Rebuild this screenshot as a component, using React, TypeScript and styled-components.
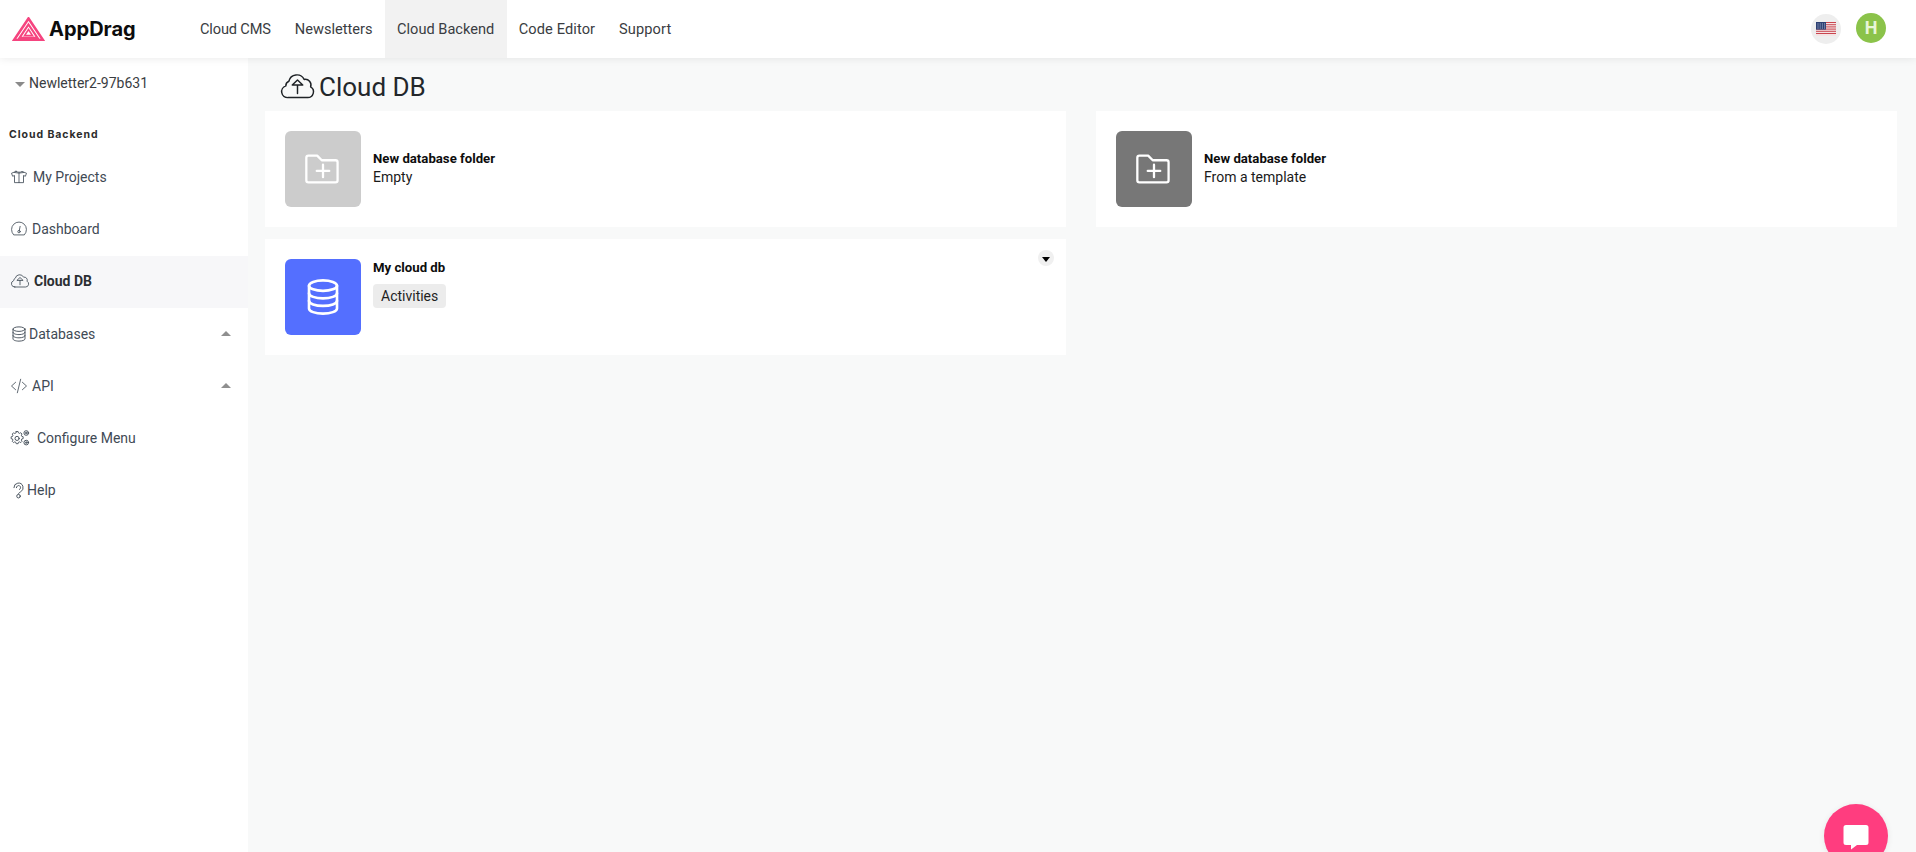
import React from "react";
import styled, { createGlobalStyle } from "styled-components";

const Global = createGlobalStyle`
  html, body { margin: 0; padding: 0; height: 100%; overflow: hidden; }
  body { font-family: Roboto, "Liberation Sans", sans-serif; background: #f8f9f9; color: #212529; }
  #root { height: 100%; }
`;

const Page = styled.div`
  display: flex;
  flex-direction: column;
  height: 852px;
  overflow: hidden;
`;

const TopBar = styled.header`
  display: flex;
  align-items: stretch;
  flex: 0 0 58px;
  height: 58px;
  background: #fff;
  box-shadow: 0 1px 8px rgba(0, 0, 0, 0.08);
  position: relative;
  z-index: 2;
`;

const Brand = styled.div`
  display: flex;
  align-items: center;
  gap: 4px;
  width: 188px;
  padding-left: 12px;
  box-sizing: border-box;
`;

const BrandName = styled.span`
  font-family: Inter, Roboto, sans-serif;
  font-size: 20px;
  font-weight: 700;
  letter-spacing: 0;
  color: #0c0c0c;
`;

const NavLink = styled.div<{ $active?: boolean; $ls?: number }>`
  display: flex;
  align-items: center;
  padding: 0 ${(p) => (p.$active ? 12.5 : 12)}px 1px;
  font-size: 14.6px;
  letter-spacing: ${(p) => p.$ls ?? 0}px;
  color: #3a3d42;
  background: ${(p) => (p.$active ? "#f2f2f2" : "transparent")};
`;

const TopRight = styled.div`
  margin-left: auto;
  display: flex;
  align-items: center;
  gap: 15px;
  padding: 0 30px 3px 0;
`;

const FlagCircle = styled.div`
  width: 30px;
  height: 30px;
  margin-top: 2px;
  border-radius: 50%;
  background: #eeeeee;
  display: flex;
  align-items: center;
  justify-content: center;
`;

const Avatar = styled.div`
  width: 30px;
  height: 30px;
  border-radius: 50%;
  background: #8bc34a;
  color: #e8f5d8;
  font-family: Roboto, sans-serif;
  font-size: 18px;
  font-weight: 700;
  display: flex;
  align-items: center;
  justify-content: center;
`;

const Body = styled.div`
  flex: 1;
  display: flex;
  min-height: 0;
`;

const Sidebar = styled.aside`
  flex: 0 0 248px;
  background: #fff;
  box-sizing: border-box;
`;

const ProjectPicker = styled.div`
  display: flex;
  align-items: center;
  gap: 4px;
  height: 20px;
  margin-top: 15px;
  padding-left: 15px;
  font-size: 14px;
  color: #3a3d42;
`;

const CaretDown = styled.span`
  width: 0;
  height: 0;
  border-left: 5px solid transparent;
  border-right: 5px solid transparent;
  border-top: 5px solid #8a8a8a;
  margin-top: 2px;
`;

const SideHeading = styled.div`
  margin: 33px 0 0 9px;
  height: 18px;
  line-height: 18px;
  font-family: Inter, Roboto, sans-serif;
  font-size: 10.5px;
  font-weight: 700;
  letter-spacing: 0.95px;
  color: #2c2c2c;
`;

const SideList = styled.nav`
  margin-top: 7px;
  display: flex;
  flex-direction: column;
`;

const SideRow = styled.div<{ $active?: boolean; $gap?: number }>`
  display: flex;
  align-items: center;
  gap: ${(p) => p.$gap ?? 5}px;
  height: 52.3px;
  padding: 0 17px 1px 10px;
  box-sizing: border-box;
  font-size: 14px;
  font-weight: ${(p) => (p.$active ? 700 : 400)};
  color: ${(p) => (p.$active ? "#2b2f33" : "#3f4a55")};
  background: ${(p) => (p.$active ? "#f7f7f9" : "transparent")};
`;

const CaretUp = styled.span`
  margin-left: auto;
  width: 0;
  height: 0;
  border-left: 5px solid transparent;
  border-right: 5px solid transparent;
  border-bottom: 5px solid #8f8f8f;
`;

const Main = styled.main`
  flex: 1;
  min-width: 0;
  padding: 0 19px 0 17px;
  box-sizing: border-box;
`;

const TitleRow = styled.div`
  display: flex;
  align-items: center;
  gap: 3px;
  height: 53px;
  padding: 4px 0 0 14px;
  box-sizing: border-box;
`;

const Title = styled.h1`
  margin: 0;
  font-size: 26px;
  font-weight: 400;
  color: #23272b;
`;

const Grid = styled.div`
  display: grid;
  grid-template-columns: 801px 801px;
  column-gap: 30px;
  row-gap: 12px;
  align-items: start;
`;

const Card = styled.section`
  position: relative;
  display: flex;
  height: 116px;
  padding: 20px;
  box-sizing: border-box;
  background: #fff;
  gap: 12px;
`;

const Tile = styled.div<{ $bg: string }>`
  flex: 0 0 76px;
  width: 76px;
  height: 76px;
  border-radius: 6px;
  background: ${(p) => p.$bg};
  display: flex;
  align-items: center;
  justify-content: center;
`;

const CardText = styled.div<{ $center?: boolean }>`
  display: flex;
  flex-direction: column;
  justify-content: ${(p) => (p.$center ? "center" : "flex-start")};
  align-items: flex-start;
  padding-bottom: ${(p) => (p.$center ? "2px" : "0")};
  color: #111;
`;

const CardTitle = styled.div`
  font-size: 13.2px;
  font-weight: 700;
  line-height: 18px;
  color: #0d0d0d;
`;

const CardSub = styled.div`
  font-size: 14px;
  line-height: 19px;
  color: #1a1a1a;
`;

const Tag = styled.span`
  margin-top: 7px;
  padding: 0 8px;
  height: 24px;
  line-height: 24px;
  border-radius: 4px;
  background: #ececec;
  font-size: 14px;
  color: #1f1f1f;
`;

const MenuDot = styled.div`
  position: absolute;
  top: 11px;
  right: 12px;
  width: 16px;
  height: 16px;
  border-radius: 50%;
  background: #f0f0f0;
  display: flex;
  align-items: center;
  justify-content: center;
  &::after {
    content: "";
    width: 0;
    height: 0;
    margin-top: 2px;
    border-left: 4.5px solid transparent;
    border-right: 4.5px solid transparent;
    border-top: 5px solid #000;
  }
`;

const ChatBubble = styled.div`
  position: absolute;
  left: 1824px;
  top: 804px;
  width: 64px;
  height: 64px;
  border-radius: 50%;
  background: #ff3d7f;
  display: flex;
  align-items: center;
  justify-content: center;
  box-shadow: 0 1px 6px rgba(0, 0, 0, 0.08);
  z-index: 3;
`;

const Icon = ({ children, size = 18, sw = 1.1, color = "#3f4a55", vb = 24 }: { children: React.ReactNode; size?: number; sw?: number; color?: string; vb?: number }) => (
  <svg width={size} height={size} viewBox={`0 0 ${vb} ${vb}`} fill="none" stroke={color} strokeWidth={sw} strokeLinecap="round" strokeLinejoin="round" style={{ flex: "none" }}>
    {children}
  </svg>
);

const CloudUp = ({ size, color, sw }: { size: number; color?: string; sw?: number }) => (
  <Icon size={size} color={color} sw={sw}>
    <path d="M5.800 19.200H18.600a3.700 3.700 0 0 0 1.900-6.900 3.700 3.700 0 0 0-4.200-4.900 5.300 5.300 0 0 0-9.900 1.200 3.300 3.300 0 0 0-2 3A3.900 3.900 0 0 0 5.800 19.200z" />
    <path d="M12 16.500v-5.500M8.600 11L12 7.800 15.400 11z" />
  </Icon>
);

const FolderPlus = () => (
  <Icon size={50} color="#fff" sw={1.1}>
    <path d="M4 6.600a1 1 0 0 1 1-1h4.200l2.200 2.200h6.600a1 1 0 0 1 1 1v8.600a1 1 0 0 1-1 1H5a1 1 0 0 1-1-1z" />
    <path d="M12 9.900v6M9 12.900h6" />
  </Icon>
);

const DbLines = ({ size, color, sw }: { size: number; color: string; sw: number }) => (
  <Icon size={size} color={color} sw={sw}>
    <ellipse cx="12" cy="5.500" rx="8" ry="3" />
    <path d="M4 5.500v13c0 1.700 3.600 3 8 3s8-1.300 8-3v-13" />
    <path d="M4 9.800c0 1.700 3.600 3 8 3s8-1.300 8-3M4 14.100c0 1.700 3.600 3 8 3s8-1.300 8-3" />
  </Icon>
);

const Logo = () => (
  <svg width="33" height="24" viewBox="0 0 33 24" fill="none" style={{ flex: "none" }}>
    <path d="M16.500 1.500L31 23H2z" stroke="#f5447f" strokeWidth="2.600" strokeLinejoin="miter" />
    <path d="M16.500 7.500L25.500 20.800H7.500z" stroke="#f5447f" strokeWidth="2.200" />
    <path d="M16.500 12.500L20.500 18.600H12.500z" stroke="#f5447f" strokeWidth="1.600" />
  </svg>
);

const Flag = () => (
  <svg width="20" height="14" viewBox="0 0 20 14" style={{ flex: "none" }}>
    <rect width="20" height="14" fill="#f4e3e3" />
    {[0, 2.2, 4.4, 6.6, 8.8, 11].map((y) => (
      <rect key={y} x="0" y={y} width="20" height="1" fill="#c9454f" />
    ))}
    <rect width="10" height="7.600" fill="#2c3f72" />
    {[1.5, 3.5, 5.5].map((y) =>
      [1.5, 3.7, 5.9, 8.1].map((x) => <rect key={`${x}-${y}`} x={x} y={y} width="1" height="1" fill="#b7c0d8" />)
    )}
  </svg>
);

export default function App() {
  return (
    <Page>
      <Global />
      <TopBar>
        <Brand>
          <Logo />
          <BrandName>AppDrag</BrandName>
        </Brand>
        <NavLink $ls={-0.15}>Cloud CMS</NavLink>
        <NavLink>Newsletters</NavLink>
        <NavLink $active>Cloud Backend</NavLink>
        <NavLink $ls={0.1}>Code Editor</NavLink>
        <NavLink $ls={0.1}>Support</NavLink>
        <TopRight>
          <FlagCircle>
            <Flag />
          </FlagCircle>
          <Avatar>H</Avatar>
        </TopRight>
      </TopBar>
      <Body>
        <Sidebar>
          <ProjectPicker>
            <CaretDown />
            Newletter2-97b631
          </ProjectPicker>
          <SideHeading>Cloud Backend</SideHeading>
          <SideList>
            <SideRow $gap={5}>
              <Icon size={18}>
                <path d="M8 4.500L2 7l1.500 4 2.500-1v9.500h12V10l2.500 1 1.500-4L16 4.500c-1 1.600-7 1.600-8 0z" />
                <path d="M12 6.500v13M6 6l6 .8L18 6" />
              </Icon>
              My Projects
            </SideRow>
            <SideRow $gap={4}>
              <Icon size={18}>
                <path d="M4.600 19.500a10 10 0 1 1 14.800 0z" />
                <path d="M13.500 8.500L12.400 14" />
                <circle cx="12" cy="15.500" r="1.600" />
              </Icon>
              Dashboard
            </SideRow>
            <SideRow $active $gap={4}>
              <CloudUp size={20} color="#3f4a55" sw={1} />
              Cloud DB
            </SideRow>
            <SideRow $gap={1}>
              <DbLines size={18} color="#3f4a55" sw={1.2} />
              Databases
              <CaretUp />
            </SideRow>
            <SideRow $gap={4}>
              <Icon size={18}>
                <path d="M7.500 7L2 12l5.500 5M16.500 7l5.500 5-5.500 5M14.200 3l-4.400 18" />
              </Icon>
              API
              <CaretUp />
            </SideRow>
            <SideRow $gap={7}>
              <Icon size={20}>
                <circle cx="8.500" cy="12.500" r="2.500" />
                <path d="M7.300 6h2.400l.4 1.700 1.500.7 1.500-.9 1.600 1.700-.9 1.400.6 1.600 1.700.400v2.400l-1.700.400-.6 1.500.9 1.500-1.600 1.600-1.500-.9-1.500.6-.4 1.700H7.300l-.4-1.700-1.500-.6-1.500.9-1.600-1.600.9-1.500-.6-1.500L.9 15.100v-2.400l1.700-.4.6-1.600-.9-1.400 1.600-1.700 1.500.9 1.500-.7z" transform="translate(0.500 -1.500) scale(0.95)" />
                <circle cx="19.500" cy="6" r="2.800" />
                <circle cx="19.500" cy="6" r="1" />
                <circle cx="19.500" cy="17.500" r="2.800" />
                <circle cx="19.500" cy="17.500" r="1" />
              </Icon>
              Configure Menu
            </SideRow>
            <SideRow $gap={0}>
              <Icon size={17} sw={1.3}>
                <path d="M5.500 8a6.500 6.500 0 1 1 9.500 5.800c-1.600.9-2.500 1.400-3 3" />
                <path d="M9 8a3 3 0 1 1 4.500 2.600" />
                <circle cx="12" cy="20" r="2.500" />
              </Icon>
              Help
            </SideRow>
          </SideList>
        </Sidebar>
        <Main>
          <TitleRow>
            <CloudUp size={37} color="#1f2327" sw={0.95} />
            <Title>Cloud DB</Title>
          </TitleRow>
          <Grid>
            <Card>
              <Tile $bg="#cccccc">
                <FolderPlus />
              </Tile>
              <CardText $center>
                <CardTitle>New database folder</CardTitle>
                <CardSub>Empty</CardSub>
              </CardText>
            </Card>
            <Card>
              <Tile $bg="#777777">
                <FolderPlus />
              </Tile>
              <CardText $center>
                <CardTitle>New database folder</CardTitle>
                <CardSub>From a template</CardSub>
              </CardText>
            </Card>
            <Card>
              <Tile $bg="#546fff">
                <DbLines size={42} color="#fff" sw={1.5} />
              </Tile>
              <CardText>
                <CardTitle>My cloud db</CardTitle>
                <Tag>Activities</Tag>
              </CardText>
              <MenuDot />
            </Card>
          </Grid>
        </Main>
      </Body>
      <ChatBubble>
        <svg width="26" height="26" viewBox="0 0 26 26" style={{ flex: "none", marginTop: 2 }}>
          <path d="M3 1h20a2.500 2.500 0 0 1 2.500 2.500v15a2.500 2.500 0 0 1-2.500 2.500H14l-6 4.500V21H3a2.500 2.500 0 0 1-2.500-2.500v-15A2.500 2.500 0 0 1 3 1z" fill="#fff" />
        </svg>
      </ChatBubble>
    </Page>
  );
}
